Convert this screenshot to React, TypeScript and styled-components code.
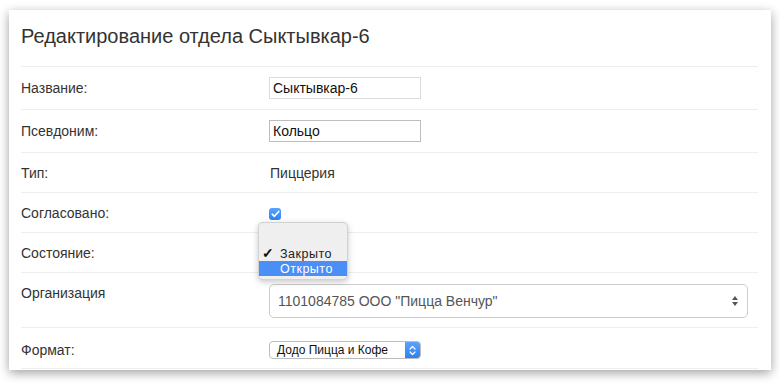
import styled, { createGlobalStyle } from "styled-components";

const GlobalStyle = createGlobalStyle`
  body {
    margin: 0;
    background: #ffffff;
    font-family: "Liberation Sans", Arial, Helvetica, sans-serif;
    color: #333333;
  }
`;

const Page = styled.div`
  padding: 10px 9px 15px 9px;
`;

const Card = styled.div`
  width: 762px;
  height: 360px;
  box-sizing: border-box;
  background: #ffffff;
  padding: 0 13px 0 12px;
  box-shadow: 0 3px 10px rgba(0, 0, 0, 0.38);
`;

const Title = styled.h3`
  margin: 0;
  height: 56px;
  box-sizing: border-box;
  padding-top: 15px;
  font-size: 20px;
  line-height: 22px;
  font-weight: normal;
  color: #333333;
`;

const Row = styled.div<{ pt?: number; pb?: number; last?: boolean }>`
  display: grid;
  grid-template-columns: 249px 1fr;
  align-items: center;
  border-top: 1px solid #eeeeee;
  border-bottom: ${({ last }) => (last ? "1px solid #eeeeee" : "none")};
  padding-top: ${({ pt }) => pt ?? 10}px;
  padding-bottom: ${({ pb }) => pb ?? 9}px;
`;

const Label = styled.div<{ top?: boolean }>`
  font-size: 14px;
  line-height: 20px;
  align-self: ${({ top }) => (top ? "start" : "center")};
  margin-top: ${({ top }) => (top ? "-1px" : "0")};
`;

const Value = styled.div`
  position: relative;
  font-size: 14px;
  line-height: 20px;
  min-height: 20px;
  display: flex;
  align-items: center;
`;

const TextInput = styled.div<{ dark?: boolean }>`
  width: 152px;
  height: 22px;
  box-sizing: border-box;
  border: 1px solid ${({ dark }) => (dark ? "#bdbdbd" : "#dcdcdc")};
  padding: 0 3px;
  font-size: 14px;
  line-height: 20px;
  color: #111111;
  margin-left: -1px;
`;

const Checkbox = styled.div`
  width: 12px;
  height: 12px;
  border-radius: 3px;
  background: linear-gradient(#5aa3fb, #2f82f5);
  display: flex;
  align-items: center;
  justify-content: center;
  margin-left: -1px;
  margin-top: 1px;
`;

const Popup = styled.div`
  position: absolute;
  left: -12px;
  top: -21px;
  width: 90px;
  height: 58px;
  box-sizing: border-box;
  padding-top: 8px;
  background: #efefef;
  border: 1px solid rgba(0, 0, 0, 0.12);
  border-radius: 5px;
  box-shadow: 0 2px 6px rgba(0, 0, 0, 0.22);
  z-index: 2;
`;

const PopupItem = styled.div<{ active?: boolean }>`
  height: 15px;
  display: flex;
  align-items: center;
  padding-left: 21px;
  position: relative;
  font-size: 12.5px;
  letter-spacing: 0.5px;
  color: ${({ active }) => (active ? "#ffffff" : "#222222")};
  background: ${({ active }) => (active ? "#4b8ef6" : "transparent")};
`;

const CheckMark = styled.span`
  position: absolute;
  left: 3px;
  top: 0;
  font-size: 14px;
  font-weight: bold;
  line-height: 15px;
  letter-spacing: 0;
  color: #111111;
`;

const OrgSelect = styled.div`
  width: 479px;
  height: 34px;
  box-sizing: border-box;
  border: 1px solid #cccccc;
  border-radius: 5px;
  padding: 0 8px;
  display: flex;
  align-items: center;
  justify-content: space-between;
  font-size: 14px;
  color: #555555;
  margin-left: -1px;
`;

const PopButton = styled.div`
  width: 152px;
  height: 18px;
  box-sizing: border-box;
  border: 1px solid #bcbcbc;
  border-radius: 4px;
  display: flex;
  overflow: hidden;
  background: #ffffff;
  margin-left: -1px;
`;

const PopText = styled.div`
  flex: 1;
  padding-left: 7px;
  font-size: 12px;
  line-height: 16px;
  color: #111111;
`;

const PopArrow = styled.div`
  width: 15px;
  background: linear-gradient(#5ca4fb, #2d80f4);
  display: flex;
  align-items: center;
  justify-content: center;
`;

export default function App() {
  return (
    <>
      <GlobalStyle />
      <Page>
        <Card>
          <Title>Редактирование отдела Сыктывкар-6</Title>
          <Row pb={10}>
            <Label>Название:</Label>
            <Value>
              <TextInput>Сыктывкар-6</TextInput>
            </Value>
          </Row>
          <Row pb={10}>
            <Label>Псевдоним:</Label>
            <Value>
              <TextInput dark>Кольцо</TextInput>
            </Value>
          </Row>
          <Row>
            <Label>Тип:</Label>
            <Value>Пиццерия</Value>
          </Row>
          <Row>
            <Label>Согласовано:</Label>
            <Value>
              <Checkbox>
                <svg width="9" height="8" viewBox="0 0 9 8">
                  <path
                    d="M1.2 4.2 L3.4 6.3 L7.8 1.4"
                    fill="none"
                    stroke="#ffffff"
                    strokeWidth="1.6"
                    strokeLinecap="round"
                    strokeLinejoin="round"
                  />
                </svg>
              </Checkbox>
            </Value>
          </Row>
          <Row>
            <Label>Состояние:</Label>
            <Value>
              <Popup>
                <PopupItem />
                <PopupItem>
                  <CheckMark>✓</CheckMark>
                  Закрыто
                </PopupItem>
                <PopupItem active>Открыто</PopupItem>
              </Popup>
            </Value>
          </Row>
          <Row pt={11} pb={9}>
            <Label top>Организация</Label>
            <Value>
              <OrgSelect>
                <span>1101084785 ООО "Пицца Венчур"</span>
                <svg width="8" height="12" viewBox="0 0 8 12">
                  <path d="M4 1 L7 5 L1 5 Z" fill="#555555" />
                  <path d="M4 11 L7 7 L1 7 Z" fill="#555555" />
                </svg>
              </OrgSelect>
            </Value>
          </Row>
          <Row pt={12} pb={8} last>
            <Label>Формат:</Label>
            <Value>
              <PopButton>
                <PopText>Додо Пицца и Кофе</PopText>
                <PopArrow>
                  <svg width="7" height="11" viewBox="0 0 7 11">
                    <path
                      d="M1 4 L3.5 1.5 L6 4 M1 7 L3.5 9.5 L6 7"
                      fill="none"
                      stroke="#ffffff"
                      strokeWidth="1.2"
                      strokeLinecap="round"
                      strokeLinejoin="round"
                    />
                  </svg>
                </PopArrow>
              </PopButton>
            </Value>
          </Row>
        </Card>
      </Page>
    </>
  );
}
